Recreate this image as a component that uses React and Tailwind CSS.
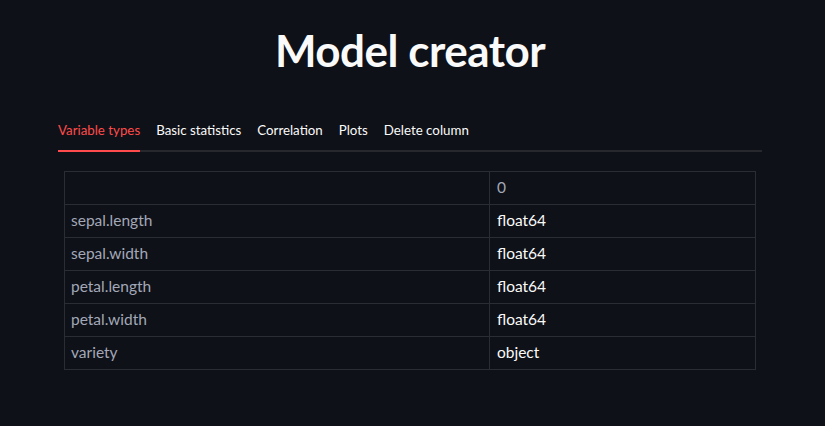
export default function App() {
  const rows = [
    ["sepal.length", "float64"],
    ["sepal.width", "float64"],
    ["petal.length", "float64"],
    ["petal.width", "float64"],
    ["variety", "object"],
  ];
  const tabs = ["Variable types", "Basic statistics", "Correlation", "Plots", "Delete column"];
  return (
    <div className="min-h-[426px] w-full bg-[#0e1117] text-[#fafafa]" style={{ fontFamily: "Lato, 'Noto Sans', sans-serif" }}>
      <div className="ml-[58px] w-[704px] pt-[25px]">
        <h1 className="text-center text-[44px] font-bold leading-[50px] tracking-[-0.5px]">Model creator</h1>
        <div className="mt-[45px] flex gap-[16px] border-b-2 border-[#26282e]">
          {tabs.map((t, i) => (
            <div
              key={t}
              className={
                "-mb-[2px] pb-[10px] text-[13.3px] leading-[20px] " +
                (i === 0 ? "border-b-2 border-[#ff4b4b] text-[#ff4b4b]" : "border-b-2 border-transparent text-[#fafafa]")
              }
            >
              {t}
            </div>
          ))}
        </div>
        <div className="ml-[6px] mt-[19px] w-[692px] border border-[#2b2d34] text-[15.5px]">
          <div className="flex h-[32px]">
            <div className="w-[425px] border-r border-[#2b2d34]"></div>
            <div className="flex flex-1 items-center px-[7px] text-[#a3a8b8]">0</div>
          </div>
          {rows.map(([a, b]) => (
            <div key={a} className="flex h-[33px] border-t border-[#2b2d34]">
              <div className="flex w-[425px] items-center border-r border-[#2b2d34] px-[6px] text-[#a3a8b8]">{a}</div>
              <div className="flex flex-1 items-center px-[7px] text-[#fafafa]">{b}</div>
            </div>
          ))}
        </div>
      </div>
    </div>
  );
}
